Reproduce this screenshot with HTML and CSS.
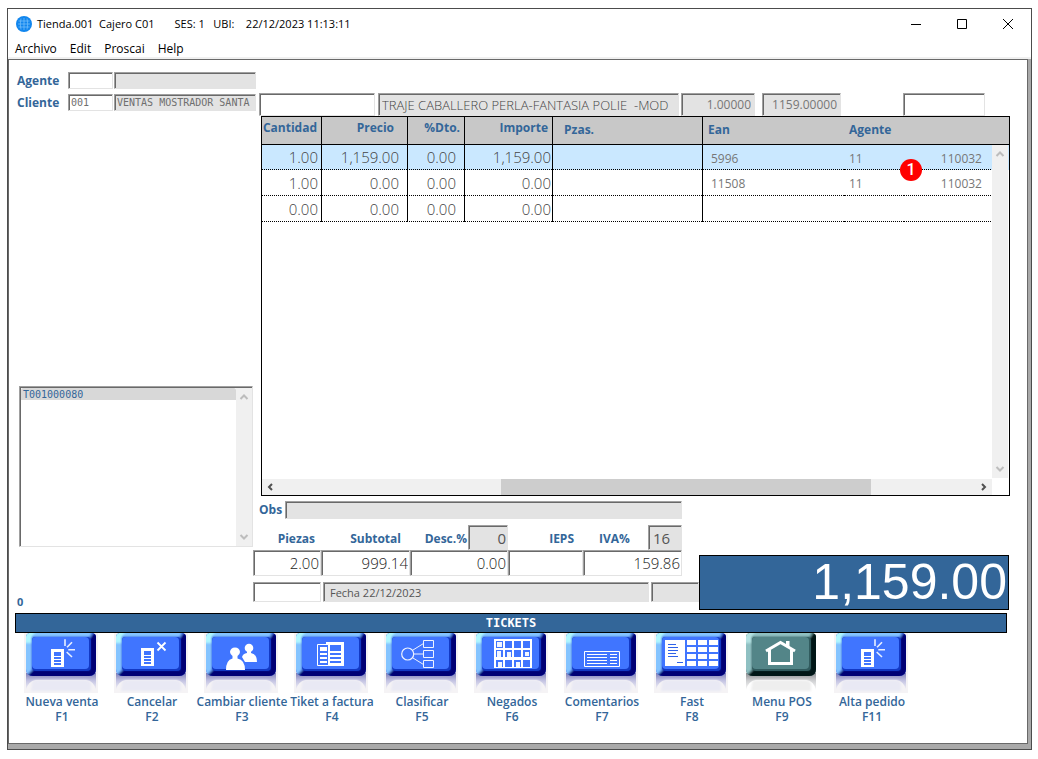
FILE: index.html
```html
<!DOCTYPE html>
<html lang="es">
<head>
<meta charset="utf-8">
<title>Tienda.001 Cajero C01</title>
<link rel="stylesheet" href="styles.css">
</head>
<body>
<svg class="sprite" aria-hidden="true">
  <defs>
    <linearGradient id="reflect" x1="0" y1="0" x2="0" y2="1"><stop offset="0" stop-color="#7f7fb8"/><stop offset=".45" stop-color="#c3c3e2"/><stop offset="1" stop-color="#f5f4f8"/></linearGradient>
    <linearGradient id="reflect-grey" x1="0" y1="0" x2="0" y2="1"><stop offset="0" stop-color="#8d8f92"/><stop offset=".45" stop-color="#cfd0d2"/><stop offset="1" stop-color="#fbfbfb"/></linearGradient>
    <clipPath id="cap"><path d="M2 4Q2 1 5 0H69Q72 1 72 4V36Q72 43 65 43H9Q2 43 2 36Z"/></clipPath>
    <filter id="soft" x="-10%" y="-10%" width="120%" height="120%"><feGaussianBlur stdDeviation="1"/></filter>
    <symbol id="key-blue" viewBox="0 0 74 60">
      <rect width="74" height="60" fill="#f5f3f5"/>
      <path d="M2 40H72V57Q70 48 62 47H12Q4 48 2 57Z" fill="url(#reflect)"/>
      <path d="M8 50Q8 47 14 47H60Q66 47 67 50V58H7Z" fill="#e9e9f4" filter="url(#soft)"/>
      <g clip-path="url(#cap)">
        <rect width="74" height="44" fill="#2048d8"/>
        <g filter="url(#soft)">
          <path d="M-2 -4H70L66 4H8V37L-2 47Z" fill="#84c4ff"/>
          <path d="M78 -3L69 1L66 5V37H9L-2 47H78Z" fill="#000074"/>
          <path d="M0 -4H14L8 3V10H0Z" fill="#aef6ff"/>
        </g>
      </g>
      <rect x="8" y="4" width="59" height="34" rx="4" fill="#1238c4"/>
      <rect x="8" y="4" width="57" height="32" rx="4" fill="#4075ff"/>
    </symbol>
    <symbol id="key-green" viewBox="0 0 74 60">
      <path d="M2 40H72V57Q70 48 62 47H12Q4 48 2 57Z" fill="url(#reflect-grey)"/>
      <path d="M8 50Q8 47 14 47H60Q66 47 67 50V58H7Z" fill="#eeeeee" filter="url(#soft)"/>
      <g clip-path="url(#cap)">
        <rect width="74" height="44" fill="#2d5557"/>
        <g filter="url(#soft)">
          <path d="M-2 -4H70L66 4H8V37L-2 47Z" fill="#8fc0c2"/>
          <path d="M78 -3L69 1L66 5V37H9L-2 47H78Z" fill="#001314"/>
          <path d="M0 -4H14L8 3V10H0Z" fill="#b4e2e2"/>
        </g>
      </g>
      <rect x="8" y="4" width="59" height="34" rx="4" fill="#315b5e"/>
      <rect x="8" y="4" width="57" height="32" rx="4" fill="#538588"/>
    </symbol>
    <symbol id="new-doc" viewBox="0 0 74 60">
      <path d="M27 16H40V34H27Z" fill="#fff"/>
      <path d="M30 19H37V23H30ZM30 24H37V26H30ZM30 27H37V29H30ZM30 30H37V32H30Z" fill="#4075ff"/>
      <path d="M41 6.300V13M48 9.300L43 14.300M44.300 16.700H51M42.700 19L48 24" stroke="#e8f0ff" stroke-width="1.600"/>
    </symbol>
  </defs>
</svg>

<main class="window">
  <header class="titlebar">
    <svg class="globe" viewBox="0 0 16 16" aria-hidden="true">
      <circle cx="8" cy="8" r="8" fill="#1186ee"/>
      <path d="M2.500 5H13.500M2 8H14M2.500 11H13.500M5 2.500Q3.500 8 5 13.500M8 2V14M11 2.500Q12.500 8 11 13.500" fill="none" stroke="#7cc3fa" stroke-width=".7"/>
    </svg>
    <h1 class="title">Tienda.001  Cajero C01       SES: 1   UBI:    22/12/2023 11:13:11</h1>
    <button class="winbtn" aria-label="Minimizar"><svg viewBox="0 0 12 12"><path d="M1 6.500H11" /></svg></button>
    <button class="winbtn" aria-label="Maximizar"><svg viewBox="0 0 12 12"><path d="M1.500 1.500H10.500V10.500H1.500Z"/></svg></button>
    <button class="winbtn" aria-label="Cerrar"><svg viewBox="0 0 12 12"><path d="M1 1L11 11M11 1L1 11"/></svg></button>
  </header>
  <nav class="menubar">
    <button>Archivo</button><button>Edit</button><button>Proscai</button><button>Help</button>
  </nav>

  <div class="panel">
    <div class="work">
      <section class="side">
        <div class="party">
          <label for="agente">Agente</label>
          <input id="agente" class="field code mono">
          <input class="field off mono" aria-label="Nombre del agente" readonly>
        </div>
        <div class="party">
          <label for="cliente">Cliente</label>
          <input id="cliente" class="field code mono" value="001">
          <input class="field off mono" aria-label="Nombre del cliente" value="VENTAS MOSTRADOR SANTA" readonly>
        </div>
        <div class="tickets field">
          <select size="12" class="mono" aria-label="Tickets"><option>T001000080</option></select>
          <div class="vscroll">
            <button aria-label="Subir"><svg viewBox="0 0 10 10"><path d="M1.500 7L5 3.500L8.500 7"/></svg></button>
            <button aria-label="Bajar"><svg viewBox="0 0 10 10"><path d="M1.500 3L5 6.500L8.500 3"/></svg></button>
          </div>
        </div>
        <output class="counter">0</output>
      </section>

      <section class="sale">
        <div class="entry">
          <input class="field scan" aria-label="Código">
          <input class="field off descr" aria-label="Descripción" value="TRAJE CABALLERO PERLA-FANTASIA POLIE  -MOD" readonly>
          <input class="field off qty" aria-label="Cantidad" value="1.00000" readonly>
          <input class="field off price" aria-label="Precio" value="1159.00000" readonly>
          <input class="field extra" aria-label="Extra">
        </div>

        <div class="grid">
          <table>
            <colgroup><col class="c-qty"><col class="c-price"><col class="c-disc"><col class="c-amount"><col class="c-pcs"><col class="c-ean"><col class="c-agent"><col><col class="c-bar"></colgroup>
            <thead>
              <tr><th class="r">Cantidad</th><th class="r p13">Precio</th><th class="r">%Dto.</th><th class="r">Importe</th><th class="low pzas">Pzas.</th><th class="low">Ean</th><th class="low flat" colspan="3">Agente</th></tr>
            </thead>
            <tbody>
              <tr class="sel"><td>1.00</td><td class="p8">1,159.00</td><td class="p8">0.00</td><td class="p1">1,159.00</td><td></td><td class="sm l">5996</td><td class="sm l flat">11</td><td class="sm flat code-cell">110032</td><td class="bar"></td></tr>
              <tr><td>1.00</td><td class="p8">0.00</td><td class="p8">0.00</td><td class="p1">0.00</td><td></td><td class="sm l">11508</td><td class="sm l flat">11</td><td class="sm flat code-cell">110032</td><td class="bar"></td></tr>
              <tr><td>0.00</td><td class="p8">0.00</td><td class="p8">0.00</td><td class="p1">0.00</td><td></td><td class="sm l"></td><td class="sm l flat"></td><td class="sm flat"></td><td class="bar"></td></tr>
            </tbody>
          </table>
          <div class="vscroll over">
            <button aria-label="Subir"><svg viewBox="0 0 10 10"><path d="M1.500 7L5 3.500L8.500 7"/></svg></button>
            <button aria-label="Bajar"><svg viewBox="0 0 10 10"><path d="M1.500 3L5 6.500L8.500 3"/></svg></button>
          </div>
          <div class="hscroll">
            <button aria-label="Izquierda"><svg viewBox="0 0 10 10"><path d="M7 2L4 5L7 8"/></svg></button>
            <div class="track"><div class="thumb"></div></div>
            <button aria-label="Derecha"><svg viewBox="0 0 10 10"><path d="M3 2L6 5L3 8"/></svg></button>
          </div>
          <span class="badge">1</span>
        </div>

        <div class="summary">
          <div class="figures">
            <div class="obs">
              <label for="obs">Obs</label>
              <input id="obs" class="field off" readonly>
            </div>
            <div class="totals">
              <div class="cell"><div class="cap p6"><label for="piezas">Piezas</label></div><input id="piezas" class="field num" value="2.00"></div>
              <div class="cell"><div class="cap p9"><label for="subtotal">Subtotal</label></div><input id="subtotal" class="field num" value="999.14"></div>
              <div class="cell"><div class="cap"><label for="desc">Desc.%</label><input class="field off num pct" aria-label="Porcentaje de descuento" value="0" readonly></div><input id="desc" class="field num" value="0.00"></div>
              <div class="cell"><div class="cap p9"><label for="ieps">IEPS</label></div><input id="ieps" class="field num"></div>
              <div class="cell"><div class="cap iva"><label for="iva">IVA%</label><input class="field off num rate" aria-label="Tasa de IVA" value="16" readonly></div><input id="iva" class="field num" value="159.86"></div>
            </div>
            <div class="foot">
              <input class="field ref" aria-label="Referencia">
              <input class="field off date" aria-label="Fecha" value="Fecha 22/12/2023" readonly>
              <input class="field off tail" aria-label="Serie" readonly>
            </div>
          </div>
          <output class="total">1,159.00</output>
        </div>
      </section>
    </div>

    <h2 class="banner">TICKETS</h2>

    <div class="keys">
      <button class="key"><svg viewBox="0 0 74 60"><use href="#key-blue"/><use href="#new-doc"/></svg><span>Nueva venta<br>F1</span></button>
      <button class="key"><svg viewBox="0 0 74 60"><use href="#key-blue"/>
        <path d="M27 15H40V33H27Z" fill="#fff"/><path d="M30 18H37V22H30ZM30 23H37V25H30ZM30 26H37V28H30ZM30 29H37V31H30Z" fill="#4075ff"/>
        <path d="M43.500 9.500L51.500 17.500M51.500 9.500L43.500 17.500" stroke="#fff" stroke-width="1.800"/></svg><span>Cancelar<br>F2</span></button>
      <button class="key"><svg viewBox="0 0 74 60"><use href="#key-blue"/>
        <g fill="#fff"><circle cx="45" cy="15" r="4.300"/><path d="M43 18H47V20Q53 21 53 29H41L38 24Q39 20.500 43 20Z"/></g>
        <path d="M22 37Q22 27 28.500 25.500V23Q26 21 26 19Q26.500 14.500 31 14.500Q35.500 14.500 36 19Q36 21 33.500 23V25.500Q41 27 41 37Z" fill="#fff"/></svg><span>Cambiar cliente<br>F3</span></button>
      <button class="key"><svg viewBox="0 0 74 60"><use href="#key-blue"/>
        <path d="M32 9H50V33H32Z" fill="#fff"/><path d="M36 12H47V18H36ZM36 20H47V22H36ZM36 24H47V26H36ZM36 28H47V30H36Z" fill="#4075ff"/>
        <path d="M23.500 11.500H34.500V32.500H23.500Z" fill="#4075ff" stroke="#fff"/><path d="M26 14H33V18H26ZM26 20H33V22H26ZM26 24H33V26H26ZM26 28H33V30H26Z" fill="#fff"/></svg><span>Tiket a factura<br>F4</span></button>
      <button class="key"><svg viewBox="0 0 74 60"><use href="#key-blue"/>
        <path d="M29 17L39.500 10.500M30 21H39.500M29 25L39.500 31.500M39.500 7.500H49.500V14.500H39.500ZM39.500 17.500H49.500V24.500H39.500ZM39.500 27.500H49.500V34.500H39.500Z" fill="none" stroke="#eef3ff"/><circle cx="23.700" cy="21" r="6" fill="none" stroke="#eef3ff" stroke-width="1.200"/></svg><span>Clasificar<br>F5</span></button>
      <button class="key"><svg viewBox="0 0 74 60"><use href="#key-blue"/>
        <path d="M20 6H58V35H20Z" fill="#fff"/><path d="M22 8H29V15H22ZM31 8H38V15H31ZM40 8H47V15H40ZM49 8H56V15H49ZM22 17H29V24H22ZM31 17H38V24H31ZM40 17H47V24H40ZM49 17H56V24H49ZM22 27H29V34H22ZM31 27H38V34H31ZM40 27H47V34H40ZM49 27H56V34H49Z" fill="#4075ff"/>
        <path d="M23 9H28V14H23ZM23 18H27V24H23ZM33 19H37V24H33ZM51 19H55V23H51ZM24 29H28V34H24ZM42 29H46V34H42Z" fill="#f2f6ff"/></svg><span>Negados<br>F6</span></button>
      <button class="key"><svg viewBox="0 0 74 60"><use href="#key-blue"/>
        <path d="M20.500 18.500H55.500V33.500H20.500ZM23 21.500H43M46 21.500H53M23 24.500H43M46 24.500H53M23 27.500H43M46 27.500H53M23 30.500H43M46 30.500H53" fill="none" stroke="#fff"/></svg><span>Comentarios<br>F7</span></button>
      <button class="key"><svg viewBox="0 0 74 60"><use href="#key-blue"/>
        <path d="M11 7H31V33H11ZM33 7H42V12H33ZM44 7H53V12H44ZM55 7H64V12H55ZM33 14H42V19H33ZM44 14H53V19H44ZM55 14H64V19H55ZM33 21H42V26H33ZM44 21H53V26H44ZM55 21H64V26H55ZM33 28H42V33H33ZM44 28H53V33H44ZM55 28H64V33H55Z" fill="#fff"/>
        <path d="M14 11.500H22M14 14.500H24M14 17.500H24M14 20.500H22M14 23.500H24M23 29.500H29" stroke="#2f62e8"/></svg><span>Fast<br>F8</span></button>
      <button class="key"><svg viewBox="0 0 74 60"><use href="#key-green"/>
        <path d="M25.500 17V30.500H47.500V17" fill="none" stroke="#fff" stroke-width="3"/><path d="M22 18L36.500 9.500L51 18" fill="none" stroke="#fff" stroke-width="3"/><path d="M42 8H45.500V14L42 12Z" fill="#fff"/></svg><span>Menu POS<br>F9</span></button>
      <button class="key"><svg viewBox="0 0 74 60"><use href="#key-blue"/><use href="#new-doc"/></svg><span>Alta pedido<br>F11</span></button>
    </div>
  </div>
</main>
</body>
</html>
```
FILE: styles.css
```css
* { box-sizing: border-box; }
body {
  margin: 0;
  min-height: 100vh;
  padding: 8px 6px 9px 7px;
  display: flex;
  background: #fff;
  font-family: "Open Sans", "Noto Sans", sans-serif;
  font-size: 12px;
  color: #336699;
}
button, input, select, output { font: inherit; color: inherit; }
button { border: 0; padding: 0; background: none; }
input { min-width: 0; border-radius: 0; }
label { font-weight: 700; font-size: 12px; line-height: 16px; }
.sprite { position: absolute; width: 0; height: 0; }
.mono { font-family: "DejaVu Sans Mono", monospace; font-size: 10px; }

.window { flex: 1; display: flex; flex-direction: column; border: 1px solid #4c4c4c; background: #a9a9a9; }
.titlebar { display: flex; align-items: center; height: 29px; padding-left: 8px; background: #fff; color: #000; }
.globe { width: 16px; height: 16px; margin-right: 5px; }
.title { flex: 1; margin: 0; font-size: 11px; font-weight: 400; white-space: pre; }
.winbtn { width: 46px; height: 29px; display: grid; place-items: center; }
.winbtn svg { width: 12px; height: 12px; fill: none; stroke: #000; }
.menubar { display: flex; gap: 13px; height: 21px; padding: 0 7px; background: #fff; border-bottom: 2px solid #f0f0f0; color: #000; font-size: 12px; }
.menubar button { height: 21px; }

.panel { flex: 1; display: flex; flex-direction: column; margin: 0 3px 5px 0; border: 1px solid #696969; background: #fff; }
.work { flex: 1; display: grid; grid-template-columns: 244px 1fr; }

.field {
  background: #fff;
  border: 1px solid;
  border-color: #a0a0a0 #e3e3e3 #e3e3e3 #a0a0a0;
  box-shadow: inset 1px 1px #696969;
  padding: 0 3px;
  color: #555;
  outline: 0;
}
.field.off { background: #e3e3e3; }
.field.mono { color: #6f6f6f; padding: 0 2px; }

.side { display: flex; flex-direction: column; padding: 12px 0 3px 6px; }
.party { display: grid; grid-template-columns: 52px 45px 1fr; column-gap: 1px; align-items: center; margin: 0 -3px 5px 0; }
.party label { padding-left: 2px; }
.party .field { height: 17px; }
.tickets { display: flex; height: 161px; margin: auto 0 0 4px; padding: 1px 0 0 1px; }
.tickets select { flex: 1; min-width: 0; border: 0; padding: 0; background: #fff; overflow: hidden; outline: 0; appearance: none; color: #336699; }
.tickets option { padding: 1px 2px 0; min-height: 12px; line-height: 12px; background: #d8d8d8; color: #336699; }
.counter { margin-top: 47px; padding-left: 2px; line-height: 16px; font-size: 11px; font-weight: 700; }

.vscroll { width: 16px; display: flex; flex-direction: column; justify-content: space-between; background: #f0f0f0; }
.vscroll button, .hscroll button { display: grid; place-items: center; width: 16px; height: 18px; }
.vscroll svg, .hscroll svg { width: 10px; height: 10px; fill: none; stroke: #bdbdbd; stroke-width: 2; }
.vscroll.over { position: absolute; top: 28px; right: 1px; bottom: 17px; }
.hscroll { display: flex; height: 16px; margin: auto 17px 0 0; background: #f0f0f0; }
.hscroll button { height: 16px; }
.hscroll svg { stroke: #505050; }
.track { flex: 1; display: flex; }
.thumb { width: 53%; margin-left: 32%; background: #cdcdcd; }

.sale { display: flex; flex-direction: column; padding: 33px 0 3px 0; min-width: 0; }
.entry { display: flex; padding-left: 6px; }
.entry .field { height: 23px; color: #777; }
.scan { width: 116px; margin-right: 3px; }
.entry .descr { width: 301px; margin-right: 2px; white-space: pre; font-size: 13px; font-weight: 300; color: #444; }
.qty { width: 74px; margin-right: 7px; text-align: right; }
.price { width: 79px; margin-right: 62px; text-align: right; }
.extra { width: 82px; }

.grid { position: relative; flex: 1; display: flex; flex-direction: column; margin: 0 17px 0 8px; border: 1px solid #000; }
table { width: 100%; table-layout: fixed; border-collapse: separate; border-spacing: 0; }
.c-qty { width: 59px; }
.c-price { width: 86px; }
.c-disc { width: 57px; }
.c-amount { width: 88px; }
.c-pcs { width: 150px; }
.c-ean { width: 142px; }
.c-agent { width: 60px; }
.c-bar { width: 18px; }
th { height: 28px; padding: 2px 4px 0 5px; background: #c8c8c8; border-bottom: 1px solid #000; vertical-align: top; text-align: left; font-size: 12px; line-height: 17px; }
th.r { text-align: right; padding-left: 0; }
th.p13 { padding-right: 13px; }
th.low { padding-top: 4px; }
th.pzas { padding-left: 11px; }
th + th, td + td { border-left: 1px solid #000; }
th + .flat, td + .flat, td + .bar { border-left: 0; }
td { height: 26px; padding: 0 3px 0 0; border-bottom: 1px dotted #000; text-align: right; font-size: 15px; font-weight: 300; line-height: 20px; color: #444; }
td.p8 { padding-right: 8px; }
td.p1 { padding-right: 1px; }
td.sm { font-size: 12px; font-weight: 400; padding-top: 3px; color: #777; }
td.l { text-align: left; padding-left: 8px; }
td.l.flat { padding-left: 5px; }
td.code-cell { padding-right: 9px; }
td.bar { border-bottom: 0; }
.sel td { height: 25px; background: #cae8ff; }
.badge { position: absolute; top: 42px; right: 87px; width: 22px; height: 22px; border-radius: 50%; background: #f00; color: #fff; font-family: Roboto, sans-serif; font-size: 16px; font-weight: 500; line-height: 22px; text-align: center; }

.summary { display: flex; align-items: flex-end; padding: 5px 18px 0 0; }
.figures { width: 446px; padding-bottom: 8px; }
.obs { display: flex; align-items: center; padding: 0 17px 0 6px; gap: 3px; }
.obs .field { flex: 1; height: 18px; }
.totals { display: grid; grid-template-columns: 68px 89px 98px 75px 99px; padding: 6px 0; }
.cap { display: flex; align-items: flex-end; justify-content: flex-end; height: 25px; }
.cap label { padding-bottom: 3px; }
.p6 { padding-right: 6px; }
.p9 { padding-right: 9px; }
.iva { justify-content: space-between; padding-left: 16px; }
.num { text-align: right; font-size: 15px; padding: 0 1px; }
.cell > .num { display: block; width: 100%; height: 26px; font-weight: 300; color: #222; }
.cap .num { height: 25px; }
.pct { width: 40px; margin-left: 1px; }
.rate { width: 34px; text-align: left; padding-left: 4px; }
.foot { display: flex; gap: 2px; }
.foot .field { height: 20px; font-size: 11px; }
.ref { width: 68px; }
.date { flex: 1; padding-left: 6px; }
.tail { width: 48px; }
.total { flex: 1; border: 1px solid #000; background: #336699; color: #fff; font-family: "Liberation Sans", Arial, sans-serif; font-size: 50px; line-height: 53px; text-align: right; padding-right: 1px; }

.banner { margin: 0 20px 0 6px; height: 20px; border: 1px solid #000; background: #336699; color: #fff; font-family: "DejaVu Sans Mono", monospace; font-size: 12px; font-weight: 700; line-height: 18px; text-align: center; }

.keys { display: grid; grid-template-columns: repeat(10, 90px); padding: 0 8px 19px; }
.key { display: flex; flex-direction: column; align-items: center; font-size: 12px; font-weight: 600; line-height: 15px; white-space: nowrap; }
.key svg { width: 74px; height: 60px; margin-right: 2px; }
.key span { padding-top: 1px; }
```
